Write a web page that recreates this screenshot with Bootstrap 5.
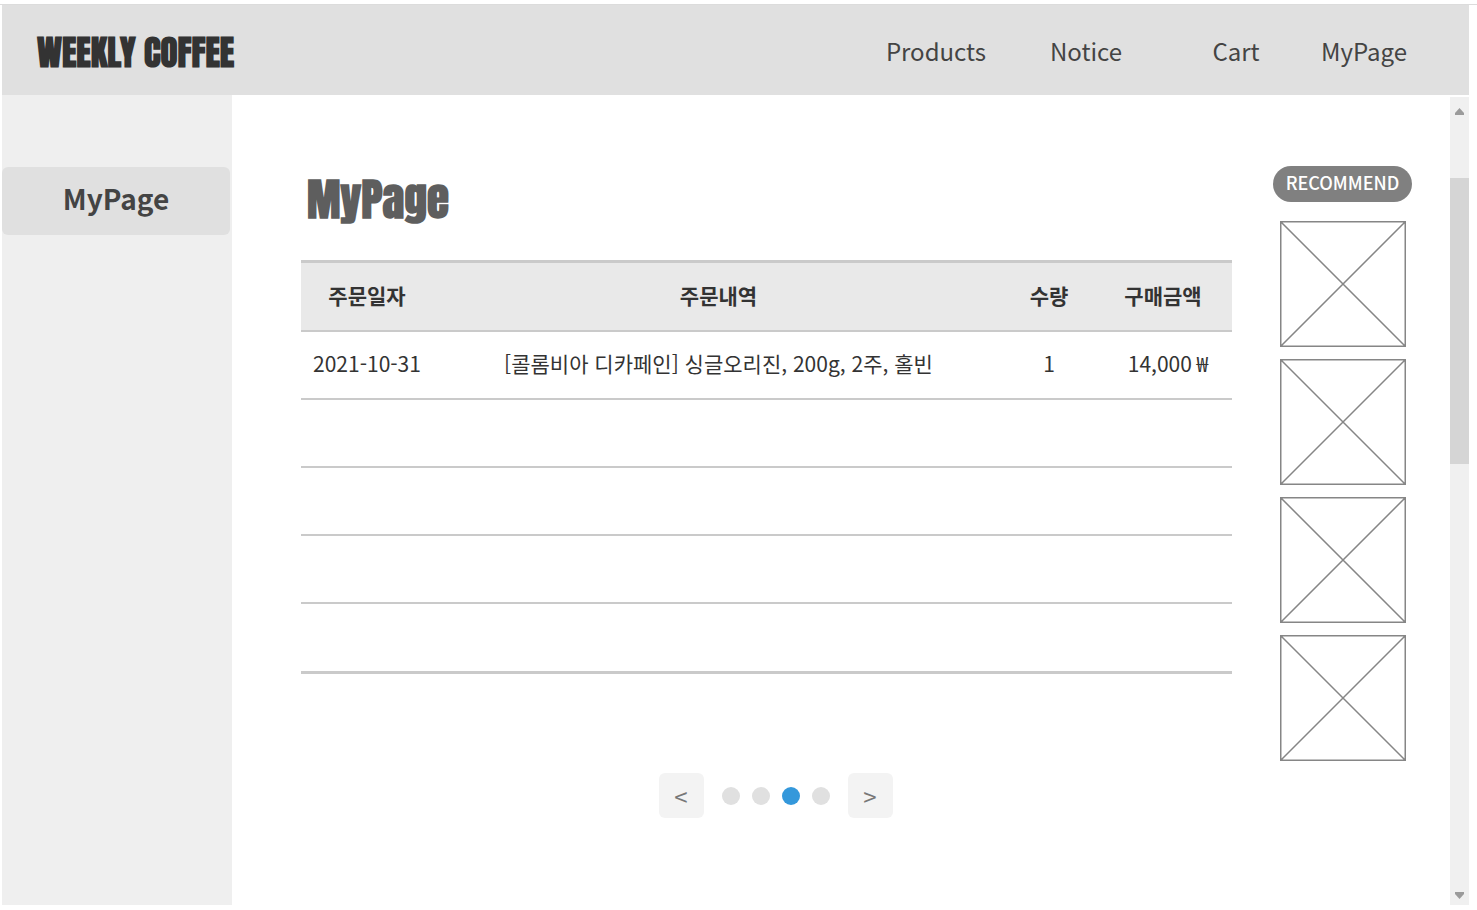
<!DOCTYPE html>
<html lang="ko">
<head>
<meta charset="utf-8">
<meta name="viewport" content="width=device-width, initial-scale=1">
<title>WEEKLY COFFEE - MyPage</title>
<link rel="stylesheet" href="https://cdn.jsdelivr.net/npm/bootstrap@5.3.0/dist/css/bootstrap.min.css">
<style>
body { font-family: "Noto Sans CJK KR", sans-serif; color: #333; background: #fff; }
.frame { min-height: 100vh; padding: 0 8px 5px 2px; }
.frame-line { height: 1px; margin: 4px -8px 0 -2px; background: #dcdcdc; }
.topbar { min-height: 90px; background: #e0e0e0; padding: 0 52px 0 35px; }
.display-face { font-family: Impact, Anton, "Noto Sans CJK KR", sans-serif; font-weight: 700; line-height: 1; }
.brand { font-size: 35px; padding-top: 4px; color: #333; }
.main-link { width: 150px; font-size: 24px; line-height: 36px; color: #444; padding-top: 1px; }
.main-link:last-child { width: 106px; }
.side { width: 230px; background: #efefef; padding: 72px 2px 0 0; }
.side-link { height: 68px; border-radius: 6px; background: #e0e0e0; color: #444; font-size: 28px; font-weight: 700; line-height: 62px; }
.content { padding: 71px 38px 0 69px; gap: 41px; }
.page-title { font-size: 45px; line-height: 46px; color: #5e5e5e; margin: 10px 0 38px 6px; padding: 0; }
.orders { border-collapse: separate; border-spacing: 0; table-layout: fixed; width: 100%; font-size: 21px; line-height: 30px; text-align: center; }
.orders th { height: 72px; background: #e9e9e9; border-top: 3px solid #cacaca; border-bottom: 2px solid #cacaca; font-weight: 700; padding: 0 0 4px; }
.orders td { height: 68px; border-bottom: 2px solid #cacaca; padding: 0 0 4px; white-space: nowrap; }
.orders tr:last-child td { height: 70px; border-bottom-width: 3px; }
.orders td:last-child { padding-left: 10px; }
.col-date { width: 132px; }
.col-qty { width: 90px; }
.col-price { width: 138px; }
.pager { margin: 99px 0 0 18px; gap: 18px; }
.pager-btn { width: 45px; height: 45px; border: 0; border-radius: 6px; background: #f3f3f3; color: #777; font-size: 24px; line-height: 45px; padding: 0; }
.dots { gap: 12px; }
.dot { width: 18px; height: 18px; border: 0; border-radius: 50%; background: #e0e0e0; padding: 0; }
.dot.active { background: #3498db; }
.recommend { width: 139px; }
.pill { height: 36px; line-height: 33px; border-radius: 18px; background: #808080; color: #fff; font-size: 18px; font-weight: 500; margin-bottom: 19px; }
.thumbs { gap: 12px; }
.scroller { width: 19px; margin-top: 2px; background: #f0f0f0; padding: 11px 0 6px; }
.scroller-thumb { height: 286px; margin-top: 63px; background: #d5d5d5; }
</style>
</head>
<body>
<div class="frame d-flex flex-column">
  <div class="frame-line"></div>
  <header class="topbar d-flex align-items-center justify-content-between">
    <a href="#" class="brand display-face text-decoration-none">WEEKLY COFFEE</a>
    <nav class="d-flex text-center">
      <a href="#" class="main-link text-decoration-none">Products</a>
      <a href="#" class="main-link text-decoration-none">Notice</a>
      <a href="#" class="main-link text-decoration-none">Cart</a>
      <a href="#" class="main-link text-decoration-none">MyPage</a>
    </nav>
  </header>
  <div class="d-flex flex-grow-1">
    <nav class="side flex-shrink-0">
      <a href="#" class="side-link d-block text-center text-decoration-none">MyPage</a>
    </nav>
    <div class="content d-flex flex-grow-1 align-items-start">
      <main class="flex-grow-1">
        <h1 class="page-title display-face">MyPage</h1>
        <table class="orders">
          <colgroup><col class="col-date"><col><col class="col-qty"><col class="col-price"></colgroup>
          <thead><tr><th>주문일자</th><th>주문내역</th><th>수량</th><th>구매금액</th></tr></thead>
          <tbody>
            <tr><td>2021-10-31</td><td>[콜롬비아 디카페인] 싱글오리진, 200g, 2주, 홀빈</td><td>1</td><td>14,000 ₩</td></tr>
            <tr><td></td><td></td><td></td><td></td></tr>
            <tr><td></td><td></td><td></td><td></td></tr>
            <tr><td></td><td></td><td></td><td></td></tr>
            <tr><td></td><td></td><td></td><td></td></tr>
          </tbody>
        </table>
        <nav class="pager d-flex justify-content-center align-items-center" aria-label="Pages">
          <button type="button" class="pager-btn">&lt;</button>
          <div class="dots d-flex">
            <button type="button" class="dot" aria-label="1"></button>
            <button type="button" class="dot" aria-label="2"></button>
            <button type="button" class="dot active" aria-label="3"></button>
            <button type="button" class="dot" aria-label="4"></button>
          </div>
          <button type="button" class="pager-btn">&gt;</button>
        </nav>
      </main>
      <aside class="recommend flex-shrink-0">
        <div class="pill text-center">RECOMMEND</div>
        <div class="thumbs d-flex flex-column align-items-center">
          <svg width="126" height="126" fill="none" stroke="#868686" stroke-width="1.5"><path d="M.75.75h124.5v124.5H.75zM1 1l124 124M125 1 1 125"/></svg>
          <svg width="126" height="126" fill="none" stroke="#868686" stroke-width="1.5"><path d="M.75.75h124.5v124.5H.75zM1 1l124 124M125 1 1 125"/></svg>
          <svg width="126" height="126" fill="none" stroke="#868686" stroke-width="1.5"><path d="M.75.75h124.5v124.5H.75zM1 1l124 124M125 1 1 125"/></svg>
          <svg width="126" height="126" fill="none" stroke="#868686" stroke-width="1.5"><path d="M.75.75h124.5v124.5H.75zM1 1l124 124M125 1 1 125"/></svg>
        </div>
      </aside>
    </div>
    <div class="scroller d-flex flex-column flex-shrink-0" aria-hidden="true">
      <svg class="mx-auto" width="9" height="7" fill="#9b9b9b"><path d="M4.500 0 9 5v2H0V5z"/></svg>
      <div class="scroller-thumb"></div>
      <svg class="mx-auto mt-auto" width="9" height="7" fill="#9b9b9b"><path d="M0 0h9v2L4.500 7 0 2z"/></svg>
    </div>
  </div>
</div>
<script src="https://cdn.jsdelivr.net/npm/bootstrap@5.3.0/dist/js/bootstrap.bundle.min.js"></script>
</body>
</html>
